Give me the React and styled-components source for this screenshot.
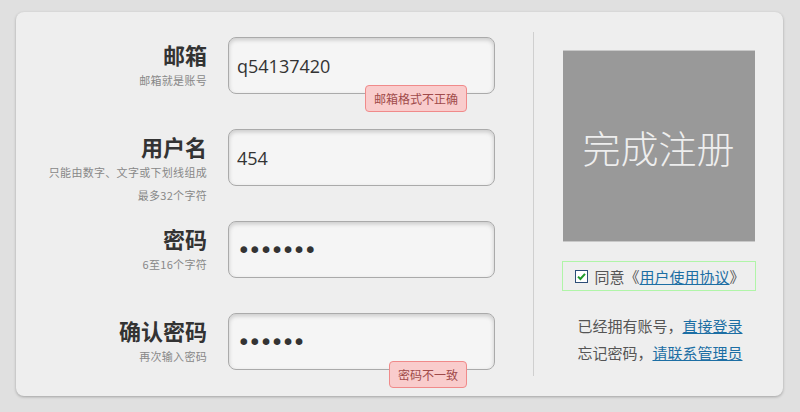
import React from 'react'
import styled, { createGlobalStyle } from 'styled-components'

const GlobalStyle = createGlobalStyle`
  html, body {
    margin: 0;
    padding: 0;
    background: #e0e0e0;
    font-family: "Open Sans", "Noto Sans CJK SC", sans-serif;
  }
`;

const fields = [
  { label: '邮箱', hints: ['邮箱就是账号'], value: 'q54137420', type: 'text', error: '邮箱格式不正确', errorWidth: 102 },
  { label: '用户名', hints: ['只能由数字、文字或下划线组成', '最多32个字符'], value: '454', type: 'text' },
  { label: '密码', hints: ['6至16个字符'], value: '1234567', type: 'password' },
  { label: '确认密码', hints: ['再次输入密码'], value: '123456', type: 'password', error: '密码不一致', errorWidth: 78 },
];

const App = () => {
  return (
    <>
      <GlobalStyle />
      <Page>
        <Card>
          <Form>
            {fields.map((f) => (
              <Row key={f.label}>
                <Label>
                  <Title>{f.label}</Title>
                  {f.hints.map((h) => (
                    <Hint key={h}>{h}</Hint>
                  ))}
                </Label>
                <Field>
                  <Input type={f.type} defaultValue={f.value} readOnly $password={f.type === 'password'} />
                  {f.error && <Tip $w={f.errorWidth}>{f.error}</Tip>}
                </Field>
              </Row>
            ))}
          </Form>
          <Divider />
          <Side>
            <Submit>完成注册</Submit>
            <Agree>
              <Check width="13" height="13" viewBox="0 0 13 13">
                <rect x="0.5" y="0.5" width="12" height="12" fill="#fff" stroke="#2c4d77" />
                <path d="M3 6.6 L5.4 9 L10 3.8" fill="none" stroke="#1f9a2a" strokeWidth="2" />
              </Check>
              同意《<Link>用户使用协议</Link>》
            </Agree>
            <Links>
              <Line>已经拥有账号，<Link>直接登录</Link></Line>
              <Line>忘记密码，<Link>请联系管理员</Link></Line>
            </Links>
          </Side>
        </Card>
      </Page>
    </>
  )
}

export default App

const Page = styled.div`
  width: 800px;
  height: 412px;
  padding: 12px 0 0 16px;
  box-sizing: border-box;
`;

const Card = styled.div`
  width: 767px;
  height: 384px;
  box-sizing: border-box;
  background: #eeeeee;
  border-radius: 8px;
  box-shadow: 0 1px 3px rgba(0, 0, 0, 0.28);
  display: flex;
`;

const Form = styled.div`
  width: 517px;
  padding-top: 25px;
  display: flex;
  flex-direction: column;
`;

const Row = styled.div`
  display: grid;
  grid-template-columns: 191px 267px;
  column-gap: 21px;
  height: 92px;
  flex-shrink: 0;
`;

const Label = styled.div`
  text-align: right;
  padding-top: 2px;
`;

const Title = styled.div`
  font-family: "Noto Sans CJK SC", sans-serif;
  font-size: 22px;
  font-weight: 700;
  line-height: 30px;
  color: #333;
`;

const Hint = styled.div`
  font-family: "Noto Sans CJK SC", sans-serif;
  font-size: 11px;
  letter-spacing: 0.3px;
  line-height: 23px;
  color: #888;
`;

const Field = styled.div`
  position: relative;
  height: 57px;
`;

const Input = styled.input`
  width: 100%;
  height: 57px;
  box-sizing: border-box;
  border: 1px solid #aaa;
  border-radius: 8px;
  background: #f5f5f5;
  box-shadow: inset 0 2px 4px rgba(0, 0, 0, 0.18);
  padding: 0 8px;
  font-family: ${(p) => (p.$password ? '"DejaVu Sans", sans-serif' : '"Open Sans", "Noto Sans CJK SC", sans-serif')};
  font-size: ${(p) => (p.$password ? '23px' : '18px')};
  letter-spacing: ${(p) => (p.$password ? '-2.5px' : '0')};
  color: #333;
  outline: none;
`;

const Tip = styled.div`
  position: absolute;
  top: 48px;
  right: 28px;
  width: ${(p) => p.$w}px;
  height: 27px;
  box-sizing: border-box;
  background: #f9cccc;
  border: 1px solid #f08a8a;
  border-radius: 4px;
  font-family: "Noto Sans CJK SC", sans-serif;
  font-size: 12px;
  line-height: 25px;
  text-align: center;
  color: #a04a4a;
`;

const Divider = styled.div`
  width: 1px;
  margin: 20px 0;
  background: #cfcfcf;
`;

const Side = styled.div`
  flex: 1;
  display: flex;
  flex-direction: column;
  align-items: center;
  padding-top: 38px;
`;

const Submit = styled.div`
  width: 192px;
  height: 192px;
  background: #999;
  border-top: 1px solid #c8c8c8;
  border-bottom: 1px solid #c8c8c8;
  box-sizing: border-box;
  display: flex;
  align-items: center;
  justify-content: center;
  font-family: "Noto Sans CJK SC", sans-serif;
  font-size: 38px;
  font-weight: 300;
  color: #eee;
  cursor: pointer;
`;

const Agree = styled.div`
  margin-top: 19px;
  width: 194px;
  height: 30px;
  box-sizing: border-box;
  border: 1px solid #b0f5a8;
  display: flex;
  align-items: center;
  padding-left: 12px;
  font-family: "Noto Sans CJK SC", sans-serif;
  font-size: 15px;
  color: #555;
`;

const Check = styled.svg`
  margin-right: 7px;
  flex: none;
`;

const Link = styled.a`
  color: #1c6ea4;
  text-decoration: underline;
  cursor: pointer;
`;

const Links = styled.div`
  margin-top: 21px;
  display: flex;
  flex-direction: column;
  align-items: flex-end;
  width: 168px;
`;

const Line = styled.div`
  font-family: "Noto Sans CJK SC", sans-serif;
  font-size: 15px;
  line-height: 27px;
  color: #555;
  white-space: nowrap;
`;
